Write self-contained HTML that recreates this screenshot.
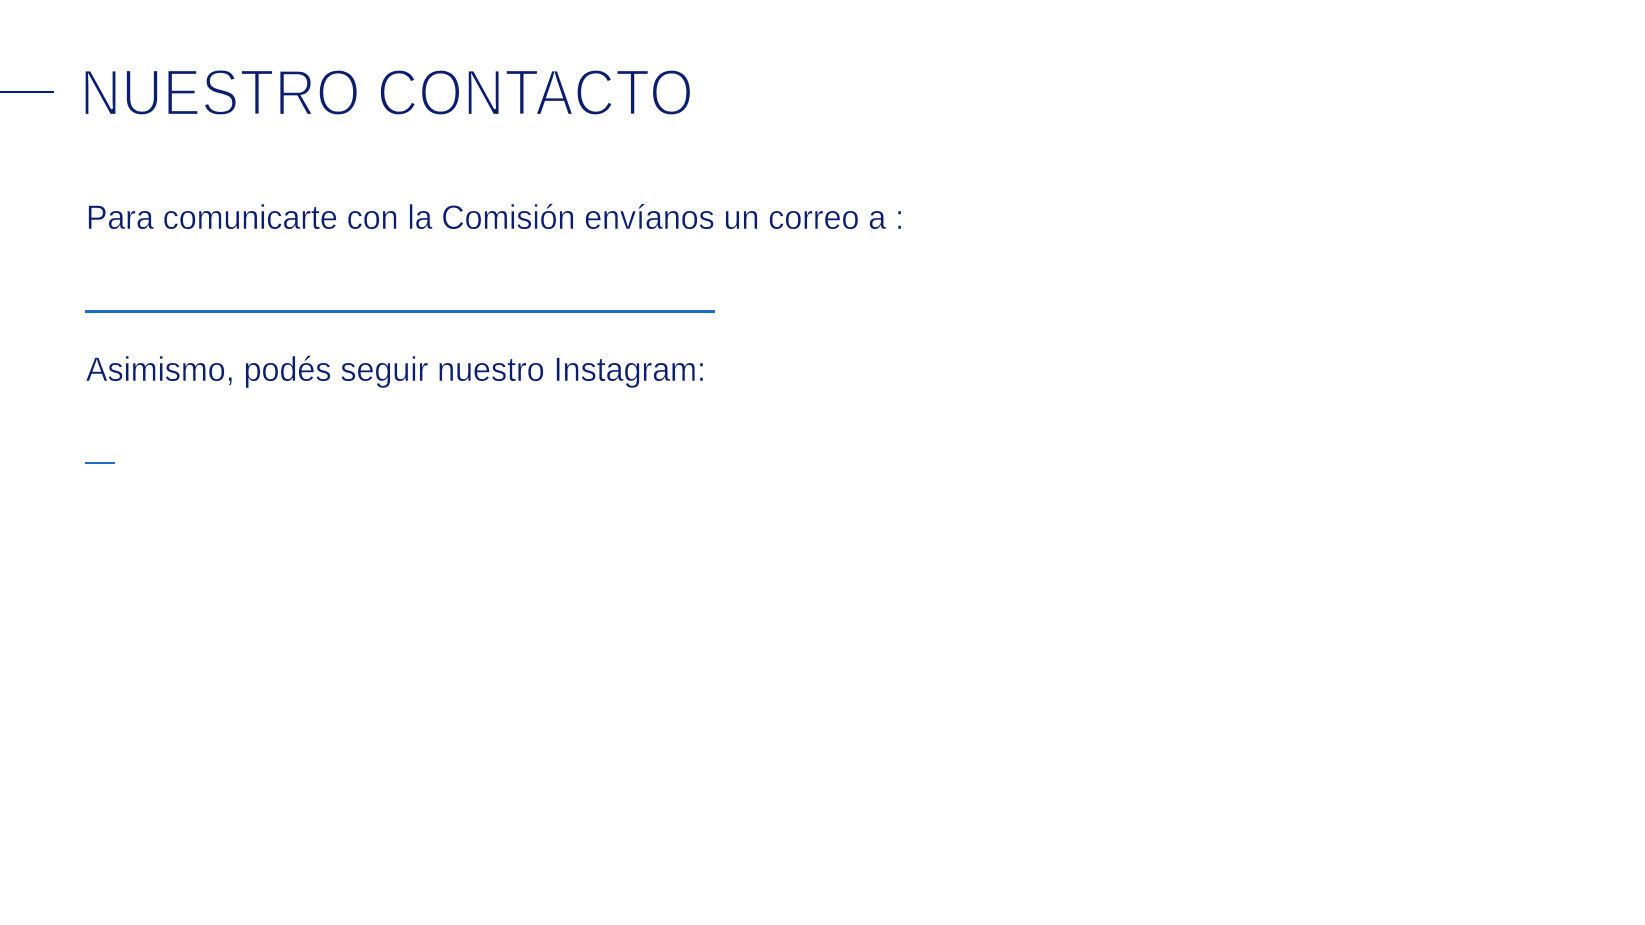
<!DOCTYPE html>
<html><head><meta charset="utf-8"><style>
html,body{margin:0;padding:0;background:#fff;width:1645px;height:925px;overflow:hidden;}
body{position:relative;font-family:"Liberation Sans Narrow","Liberation Sans",sans-serif;color:#0b1d6e;}
.t{position:absolute;white-space:nowrap;transform-origin:0 0;line-height:1;}
.bar{position:absolute;}
</style></head><body>
<div class="bar" style="left:0;top:91px;width:54px;height:2px;background:#0b1d6e"></div>
<div class="t" id="title" data-w="614" style="left:80px;top:60px;font-size:65px;letter-spacing:0.5px;-webkit-text-stroke:2.2px #fff;paint-order:normal">NUESTRO CONTACTO</div>
<div class="t" id="p1" data-w="818" style="left:86px;top:201px;font-size:34px;-webkit-text-stroke:0.4px #fff">Para comunicarte con la Comisión envíanos un correo a :</div>
<div class="bar" style="left:85px;top:310px;width:630px;height:3px;background:#1f6cc4"></div>
<div class="t" id="p2" data-w="620" style="left:86px;top:353px;font-size:34px;-webkit-text-stroke:0.4px #fff">Asimismo, podés seguir nuestro Instagram:</div>
<div class="bar" style="left:85px;top:462px;width:30px;height:2px;background:#1f6cc4"></div>
<script>
document.querySelectorAll('.t').forEach(function(e){var w=+e.dataset.w;var r=e.getBoundingClientRect().width;if(r>0)e.style.transform='scaleX('+(w/r)+')';});
</script>
</body></html>
